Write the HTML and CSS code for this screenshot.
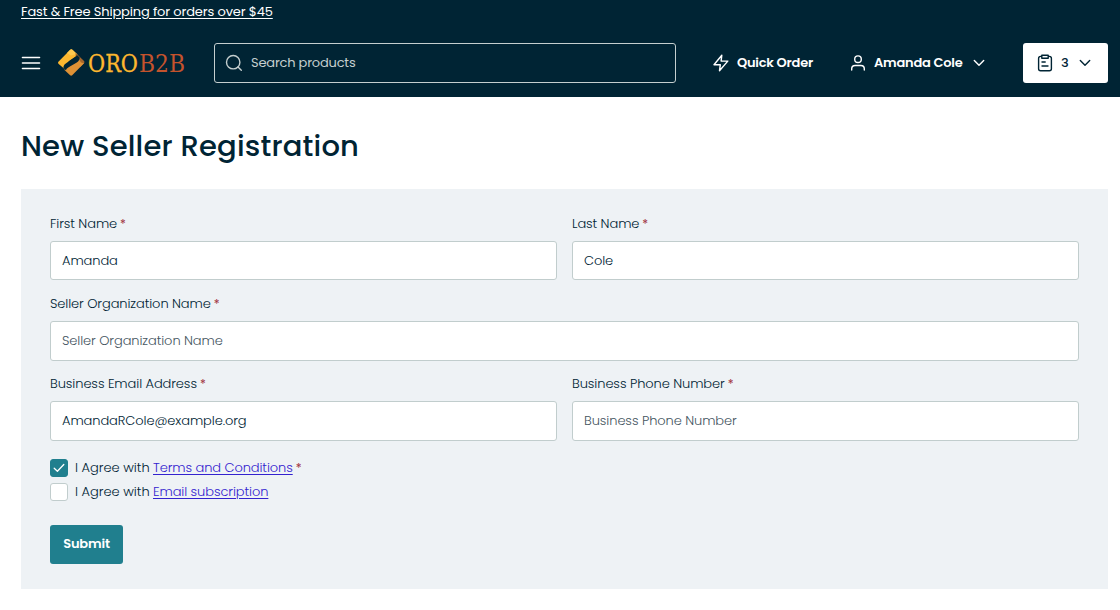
FILE: index.html
```html
<!DOCTYPE html>
<html lang="en">
<head>
<meta charset="utf-8">
<title>New Seller Registration</title>
<link rel="stylesheet" href="styles.css">
</head>
<body>
<header class="header">
  <div class="promo"><a class="promo-link" href="#">Fast &amp; Free Shipping for orders over $45</a></div>
  <div class="bar">
    <svg class="menu" width="20" height="14" viewBox="0 0 20 14" fill="none" stroke="#fff" stroke-width="1.6" stroke-linecap="round"><path d="M1.5 1.5h17M1.5 7h17M1.5 12.5h17"/></svg>
    <svg class="logo" width="130" height="30" viewBox="0 0 130 30">
      <path d="M1.4 13.8 13.2 1.7Q14.3.8 15.4 1.7L20.8 6.9 12 13 7.3 20.8 1.4 15.7Q.6 14.8 1.4 13.8Z" fill="#fcb72f"/>
      <path d="M10 5 13.2 1.7Q14.3.8 15.4 1.7L20 6.1 14 7.5Z" fill="#fdc950"/>
      <path d="M18.5 4.7 27 13.1Q28 14.2 27 15.3L23 19.2 18.7 7.5Z" fill="#a5662c"/>
      <path d="M8 20.4 21.5 10.6 24 14.5 27 15.3 15.2 27.3Q14.2 28.2 13.1 27.3L7.5 22Z" fill="#de9135"/>
      <path d="M6.4 19.8C6.4 17 8 15.8 10.5 14.2L17.5 9.8Q19.2 8.6 19.9 7L22.7 9.6C22.7 12 21.8 13.2 19.8 14.5L12 19Q9.5 20.4 8.8 22.2Z" fill="#002434"/>
      <text class="logo-oro" x="31" y="23.5" textLength="50" lengthAdjust="spacingAndGlyphs">ORO</text>
      <text class="logo-b2b" x="82" y="23.5" textLength="46" lengthAdjust="spacingAndGlyphs">B2B</text>
    </svg>
    <div class="search">
      <svg width="18" height="18" viewBox="0 0 18 18" fill="none" stroke="#c5cfcf" stroke-width="1.4" stroke-linecap="round"><circle cx="8.2" cy="8.2" r="6.7"/><path d="m13 13 3.3 3.3"/></svg>
      <span class="search-text">Search products</span>
    </div>
    <a class="nav quick">
      <svg width="16" height="18" viewBox="0 0 16 18" fill="none" stroke="#fff" stroke-width="1.4" stroke-linejoin="round"><path d="M8.8 1.3 1 10.8h6.3L6.5 16.7l8.3-9.6H8.1Z"/></svg>
      <span class="quick-text">Quick Order</span>
    </a>
    <a class="nav user">
      <svg width="16" height="18" viewBox="0 0 16 18" fill="none" stroke="#fff" stroke-width="1.4" stroke-linecap="round"><circle cx="8" cy="5.2" r="3.3"/><path d="M1.7 16v-1.3q0-3.2 3.4-3.2h5.8q3.4 0 3.4 3.2V16"/></svg>
      <span class="user-text">Amanda Cole</span>
      <svg class="chevron" width="12" height="8" viewBox="0 0 12 8" fill="none" stroke="#fff" stroke-width="1.4" stroke-linecap="round" stroke-linejoin="round"><path d="m1.3 1.5 4.7 4.8 4.7-4.8"/></svg>
    </a>
    <div class="cart">
      <svg width="16" height="18" viewBox="0 0 16 18" fill="none" stroke="#002434" stroke-width="1.4" stroke-linecap="round" stroke-linejoin="round"><path d="M4.8 2.4H3.6Q1.6 2.4 1.6 4.4v10.3q0 2 2 2h8.8q2 0 2-2V4.4q0-2-2-2h-1.2M4.8 1.2h6.4v3H4.8ZM5 8h3.2M5 12h6"/></svg>
      <span class="count">3</span>
      <svg width="12" height="8" viewBox="0 0 12 8" fill="none" stroke="#002434" stroke-width="1.4" stroke-linecap="round" stroke-linejoin="round"><path d="m1.3 1.5 4.7 4.8 4.7-4.8"/></svg>
    </div>
  </div>
</header>
<main class="main">
  <h1 class="title">New Seller Registration</h1>
  <form class="panel">
    <div class="row">
      <div class="field"><div class="label">First Name<span class="req">*</span></div><div class="input short">Amanda</div></div>
      <div class="field"><div class="label">Last Name<span class="req">*</span></div><div class="input short">Cole</div></div>
    </div>
    <div class="row">
      <div class="field"><div class="label">Seller Organization Name<span class="req">*</span></div><div class="input hint">Seller Organization Name</div></div>
    </div>
    <div class="row">
      <div class="field"><div class="label">Business Email Address<span class="req">*</span></div><div class="input">AmandaRCole@example.org</div></div>
      <div class="field"><div class="label">Business Phone Number<span class="req">*</span></div><div class="input hint">Business Phone Number</div></div>
    </div>
    <div class="checks">
      <div class="check"><span class="box on"><svg width="12" height="10" viewBox="0 0 12 10" fill="none" stroke="#fff" stroke-width="1.3" stroke-linecap="round" stroke-linejoin="round"><path d="m1.2 5.3 3.2 3L10.8 1.5"/></svg></span><span class="agree">I Agree with</span><a class="link" href="#">Terms and Conditions</a><span class="req">*</span></div>
      <div class="check"><span class="box"></span><span class="agree">I Agree with</span><a class="link" href="#">Email subscription</a></div>
    </div>
    <button class="submit" type="button">Submit</button>
  </form>
</main>
</body>
</html>
```
FILE: styles.css
```css
* { box-sizing: border-box; }
body { margin: 0; background: #fff; color: #002434; font: 13px/20px Poppins, Inter, sans-serif; white-space: nowrap; }
svg { display: block; flex: none; }
.header { height: 97px; background: #002434; color: #fff; }
.promo { height: 43px; padding: 2px 21px 0; }
.promo-link { color: #fff; text-underline-offset: 2px; letter-spacing: -.14px; }
.bar { display: flex; align-items: center; height: 40px; padding: 0 12px 0 21px; }
.logo { margin-left: 16px; }
.logo-oro, .logo-b2b { font-family: "DejaVu Serif", serif; font-size: 23.5px; stroke-width: .3; }
.logo-oro { fill: #fcb72f; stroke: #fcb72f; }
.logo-b2b { fill: #c4532d; stroke: none; }
.search { display: flex; align-items: center; gap: 8px; width: 462px; height: 40px; margin-left: 27px; padding-left: 10px; border: 1px solid #c5cfcf; border-radius: 3px; color: #c5cfcf; letter-spacing: -.2px; }
.nav { display: flex; align-items: center; font-weight: 600; gap: 8px; letter-spacing: -.23px; }
.quick { width: 137px; margin-left: 37px; }
.chevron { margin-left: 3px; }
.cart { display: flex; align-items: center; width: 85px; height: 40px; margin-left: auto; padding-left: 14px; border-radius: 3px; background: #fff; color: #002434; font-weight: 500; }
.count { width: 18px; margin-left: 8px; }
.main { padding: 0 12px 0 21px; }
.title { height: 92px; margin: 0; padding-top: 27px; font-size: 29px; line-height: 44px; font-weight: 500; letter-spacing: .18px; }
.panel { height: 400px; padding: 24px 29px; background: #eef2f5; font-weight: 300; letter-spacing: -.09px; }
.row { display: flex; gap: 15px; height: 80px; }
.field { flex: 1; }
.label { display: flex; gap: 3px; height: 28px; line-height: 22px; }
.req { color: #a13240; font-size: 12px; font-weight: 400; }
.input { display: flex; align-items: center; height: 40px; padding-left: 11px; border: 1px solid #c1cdcd; border-radius: 3px; background: #fff; }
.short { height: 39px; }
.hint { color: #46565f; }
.checks { height: 72px; padding-top: 3px; }
.check { display: flex; align-items: center; height: 24px; }
.check .req { margin-left: 3px; }
.box { display: flex; align-items: center; justify-content: center; width: 18px; height: 18px; margin-right: 7px; border: 1px solid #c1cdcd; border-radius: 3px; background: #fff; }
.on { border-color: #207f8e; background: #207f8e; }
.agree { width: 78px; letter-spacing: 0; }
.link { color: #3322cf; text-underline-offset: 2px; }
.submit { display: block; width: 73px; height: 39px; padding: 0 0 2px; border: 0; border-radius: 3px; background: #207f8e; color: #fff; font: inherit; font-weight: 600; letter-spacing: -.15px; }
```
